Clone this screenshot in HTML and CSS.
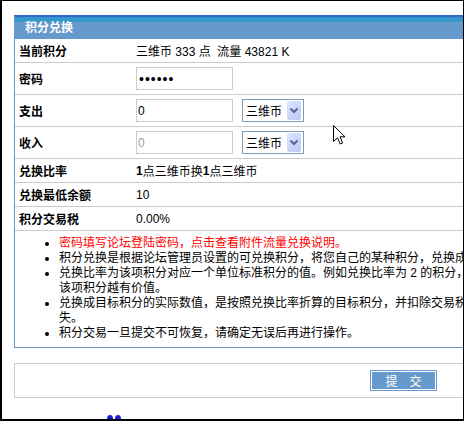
FILE: index.html
```html
<!DOCTYPE html>
<html lang="zh-CN">
<head>
<meta charset="utf-8">
<title>积分兑换</title>
<link rel="stylesheet" href="styles.css">
</head>
<body>
<div class="frame">
  <div class="panel">
    <div class="head">积分兑换</div>
    <div class="row s"><div class="lab">当前积分</div><div class="val">三维币 333 点&nbsp; 流量 43821 K</div></div>
    <div class="row t"><div class="lab">密码</div><div class="val"><input class="ipt pw" type="password" value="123456"></div></div>
    <div class="row t"><div class="lab">支出</div><div class="val"><input class="ipt" type="text" value="0"><span class="sel"><span class="sel-txt">三维币</span><span class="sel-btn"><svg width="14" height="19" viewBox="0 0 14 19"><path d="M3.5 7.5 L7 11 L10.5 7.5" fill="none" stroke="#56668f" stroke-width="2"/></svg></span></span></div></div>
    <div class="row t"><div class="lab">收入</div><div class="val"><input class="ipt off" type="text" value="0" readonly><span class="sel"><span class="sel-txt">三维币</span><span class="sel-btn"><svg width="14" height="19" viewBox="0 0 14 19"><path d="M3.5 7.5 L7 11 L10.5 7.5" fill="none" stroke="#56668f" stroke-width="2"/></svg></span></span></div></div>
    <div class="row s"><div class="lab">兑换比率</div><div class="val"><b>1</b>点三维币换<b>1</b>点三维币</div></div>
    <div class="row s"><div class="lab">兑换最低余额</div><div class="val">10</div></div>
    <div class="row s"><div class="lab">积分交易税</div><div class="val">0.00%</div></div>
    <ul class="notes">
      <li class="red">密码填写论坛登陆密码，点击查看附件流量兑换说明。</li>
      <li>积分兑换是根据论坛管理员设置的可兑换积分，将您自己的某种积分，兑换成另一种积分。</li>
      <li>兑换比率为该项积分对应一个单位标准积分的值。例如兑换比率为 2 的积分，兑换比率越高，<br>该项积分越有价值。</li>
      <li>兑换成目标积分的实际数值，是按照兑换比率折算的目标积分，并扣除交易税后的数值，交易税为您的积分损<br>失。</li>
      <li>积分交易一旦提交不可恢复，请确定无误后再进行操作。</li>
    </ul>
  </div>
  <div class="submit"><button class="btn" type="button">提　交</button></div>
  <div class="dots"><span></span><span></span></div>
  <svg class="cursor" width="13" height="21" viewBox="0 0 13 21"><path d="M0.5 0.5 L0.5 16.5 L4.5 12.8 L7.2 19 L9.6 18 L7 11.8 L12 11.8 Z" fill="#fff" stroke="#000" stroke-width="1" stroke-linejoin="miter"/></svg>
</div>
</body>
</html>
```
FILE: styles.css
```css
html, body {
  margin: 0;
  padding: 0;
  overflow: hidden;
  background: #fff;
}
body {
  font: 12px "Liberation Sans", "Noto Sans CJK SC", sans-serif;
  color: #000;
}
.frame {
  position: relative;
  width: 464px;
  height: 421px;
  box-sizing: border-box;
  border-style: solid;
  border-color: #000;
  border-width: 1px 1px 2px 2px;
  overflow: hidden;
}
.panel {
  margin: 14px 0 0 12px;
  width: 778px;
  border: 1px solid #6699cc;
  border-top: 2px solid #3366cc;
}
.head {
  height: 22px;
  box-sizing: border-box;
  padding: 5px 0 0 10px;
  line-height: 13px;
  background: linear-gradient(#3399cc 0 5px, #6699cc 5px);
  color: #fff;
  font-weight: bold;
}
.row {
  display: flex;
  align-items: center;
  border-bottom: 1px solid #cccccc;
}
.row.s { height: 23px; }
.row.t { height: 31px; }
.lab {
  width: 117px;
  padding-left: 4px;
  font-weight: bold;
}
.val {
  display: flex;
  align-items: center;
  white-space: nowrap;
}
.ipt {
  width: 97px;
  height: 23px;
  box-sizing: border-box;
  margin: 0;
  border: 1px solid #cccccc;
  padding: 0 1px;
  font: 12px "Liberation Sans", "Noto Sans CJK SC", sans-serif;
  color: #000;
  outline: none;
}
.ipt.pw {
  padding-left: 2px;
  font-size: 14px;
  letter-spacing: 1px;
}
.ipt.off { color: #999; }
.sel {
  display: inline-flex;
  align-items: center;
  margin-left: 9px;
  width: 62px;
  height: 23px;
  box-sizing: border-box;
  border: 1px solid #7f9db9;
  padding: 1px 2px 1px 3px;
}
.sel-btn {
  display: flex;
  margin-left: auto;
  width: 14px;
  height: 19px;
  background: linear-gradient(135deg, #dfe6ff, #b9c6f4);
  border-radius: 2px;
}
.notes {
  margin: 0;
  padding: 5px 0 6px 44px;
  list-style: disc;
  line-height: 15px;
  white-space: nowrap;
}
.notes li::marker {
  color: #000;
}
.notes .red { color: #ff0000; }
.submit {
  display: flex;
  justify-content: center;
  align-items: flex-start;
  margin: 15px 0 0 12px;
  width: 777px;
  height: 27px;
  padding-top: 6px;
  border: 1px solid #cccccc;
}
.btn {
  width: 67px;
  height: 21px;
  box-sizing: border-box;
  margin: 0;
  padding: 0;
  border: 1px solid #6699cc;
  box-shadow: inset 0 0 0 1px #fff;
  background: #6699cc;
  color: #fff;
  font: 12px "Liberation Sans", "Noto Sans CJK SC", sans-serif;
}
.dots {
  display: flex;
  gap: 2px;
  margin: 17px 0 0 105px;
}
.dots span {
  width: 6px;
  height: 8px;
  border-radius: 50%;
  background: #1c1ccc;
}
.cursor {
  position: absolute;
  left: 331px;
  top: 124px;
}
```
